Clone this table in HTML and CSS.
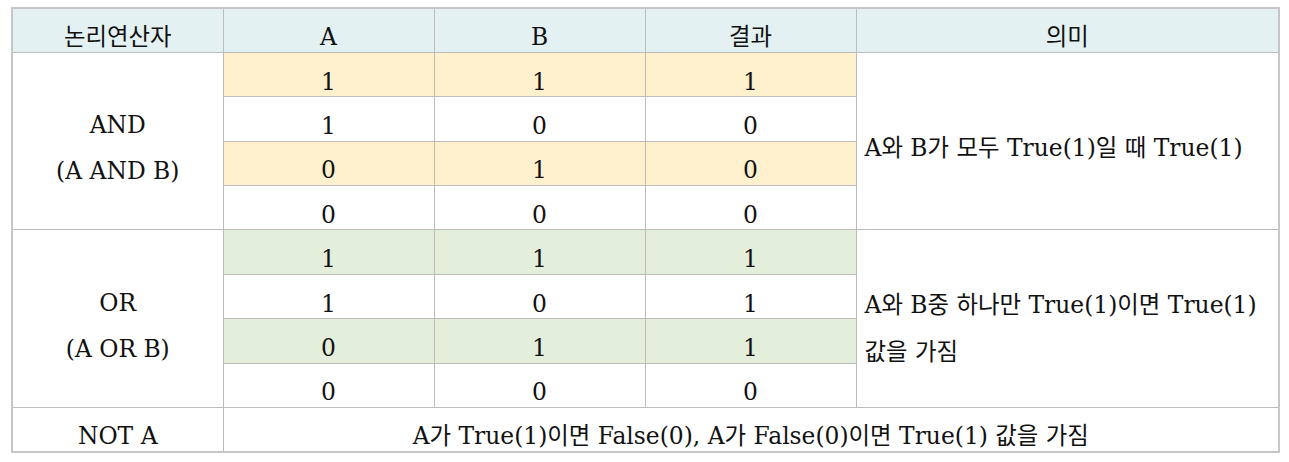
FILE: index.html
```html
<!DOCTYPE html>
<html lang="ko">
<head>
<meta charset="utf-8">
<title>논리연산자</title>
<link rel="stylesheet" href="styles.css">
</head>
<body>
<table class="logic">
  <colgroup>
    <col class="c-op">
    <col class="c-v">
    <col class="c-v">
    <col class="c-v">
    <col class="c-mean">
  </colgroup>
  <thead>
    <tr>
      <th>논리연산자</th>
      <th>A</th>
      <th>B</th>
      <th>결과</th>
      <th>의미</th>
    </tr>
  </thead>
  <tbody>
    <tr>
      <td rowspan="4" class="op">AND<br>(A AND B)</td>
      <td class="y">1</td><td class="y">1</td><td class="y">1</td>
      <td rowspan="4" class="mean">A와 B가 모두 True(1)일 때 True(1)</td>
    </tr>
    <tr><td>1</td><td>0</td><td>0</td></tr>
    <tr><td class="y">0</td><td class="y">1</td><td class="y">0</td></tr>
    <tr><td>0</td><td>0</td><td>0</td></tr>
    <tr>
      <td rowspan="4" class="op">OR<br>(A OR B)</td>
      <td class="g">1</td><td class="g">1</td><td class="g">1</td>
      <td rowspan="4" class="mean two">A와 B중 하나만 True(1)이면 True(1)<br>값을 가짐</td>
    </tr>
    <tr><td>1</td><td>0</td><td>1</td></tr>
    <tr><td class="g">0</td><td class="g">1</td><td class="g">1</td></tr>
    <tr><td>0</td><td>0</td><td>0</td></tr>
    <tr>
      <td>NOT A</td>
      <td colspan="4">A가 True(1)이면 False(0), A가 False(0)이면 True(1) 값을 가짐</td>
    </tr>
  </tbody>
</table>
</body>
</html>
```
FILE: styles.css
```css
html, body {
  background: #ffffff;
}
body {
  margin: 7px 0 0 11px;
  font-family: "DejaVu Serif", "Noto Sans CJK KR", serif;
  font-size: 23.4px;
  color: #111111;
}
.logic {
  border-collapse: collapse;
  table-layout: fixed;
  width: 1267px;
  border: 2px solid #c6c6c6;
}
.c-op { width: 211px; }
.c-v { width: 211px; }
.c-mean { width: 423px; }
.logic tr {
  height: 44.4px;
}
.logic th,
.logic td {
  border: 1px solid #bcbcbc;
  padding: 14px 0 0 0;
  line-height: 26px;
  text-align: center;
  vertical-align: middle;
  font-weight: normal;
  white-space: nowrap;
}
.logic th {
  background: #e3f1f3;
}
.logic td.y {
  background: #fff1cd;
}
.logic td.g {
  background: #e3efdb;
}
.logic td.op {
  line-height: 46px;
}
.logic td.mean {
  text-align: left;
  padding-left: 8px;
}
.logic td.mean.two {
  line-height: 47px;
  padding-top: 20px;
}
```
